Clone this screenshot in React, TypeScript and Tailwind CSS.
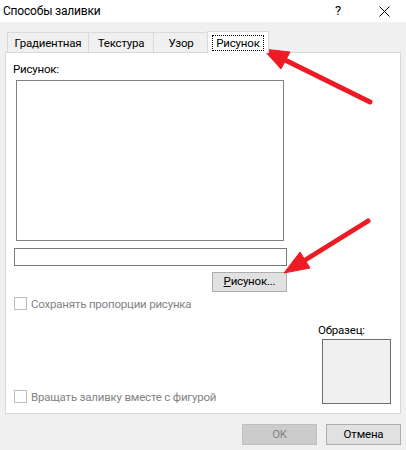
import React from "react"

const font = { fontFamily: 'Roboto, "Noto Sans", sans-serif' }

function Tab({ label, active, w }: { label: string; active?: boolean; w: string }) {
  if (active) {
    return (
      <div className={`relative z-10 -ml-[2px] -mb-px flex h-[22px] ${w} items-start justify-center border border-b-0 border-[#d9d9d9] bg-white pt-[3px]`}>
        <span className="border border-dotted border-black px-[3px] leading-[14px]">{label}</span>
      </div>
    )
  }
  return (
    <div className={`flex h-[20px] ${w} items-center justify-center border border-b-0 border-l-0 first:border-l border-[#d9d9d9] bg-[#f0f0f0] pt-[2px]`}>
      {label}
    </div>
  )
}

function Checkbox({ label }: { label: string }) {
  return (
    <div className="flex h-[14px] items-center gap-[4px] text-[#838383]">
      <div className="h-[13px] w-[13px] border border-[#bcbcbc] bg-white" />
      <span className="leading-[14px]">{label}</span>
    </div>
  )
}

export default function App() {
  return (
    <div className="relative h-[450px] w-[406px] overflow-hidden bg-[#f0f0f0] text-[11.5px] tracking-[-0.2px] text-black" style={font}>
      {/* title bar */}
      <div className="flex h-[22px] items-center bg-white">
        <span className="ml-[3px] text-[12px] leading-[16px]">Способы заливки</span>
        <span className="ml-auto text-[13px] leading-[16px]">?</span>
        <svg className="ml-[38px] mr-[16px]" width="11" height="11" viewBox="0 0 11 11">
          <path d="M0.5 0.5L10.5 10.5M10.5 0.5L0.5 10.5" stroke="#000" strokeWidth="1" />
        </svg>
      </div>

      <div className="px-[5px] pt-[8px]">
        {/* tabs */}
        <div className="flex h-[22px] items-end pl-[2px]">
          <Tab label="Градиентная" w="w-[82px]" />
          <Tab label="Текстура" w="w-[65px]" />
          <Tab label="Узор" w="w-[55px]" />
          <Tab label="Рисунок" w="w-[62px]" active />
        </div>

        {/* panel */}
        <div className="flex h-[362px] w-[396px] flex-col border border-[#d9d9d9] bg-white">
          <div className="ml-[7px] mt-[8px] leading-[16px]">Рисунок:</div>
          <div className="ml-[10px] mt-[3px] h-[163px] w-[268px] border border-[#838383] bg-white" />
          <div className="ml-[8px] mt-[7px] h-[18px] w-[273px] border border-[#7a7a7a] bg-white" />
          <div className="ml-[206px] mt-[6px] flex h-[20px] w-[75px] items-center justify-center border border-[#adadad] bg-[#e1e1e1]">
            <span><span className="underline">Р</span>исунок...</span>
          </div>
          <div className="ml-[8px] mt-[5px]">
            <Checkbox label="Сохранять пропорции рисунка" />
          </div>
          <div className="mt-[11px] flex flex-1 items-end justify-between pb-[9px] pl-[8px] pr-[9px]">
            <Checkbox label="Вращать заливку вместе с фигурой" />
            <div className="flex flex-col items-end">
              <span className="-ml-[4px] self-start leading-[16px]">Образец:</span>
              <div className="mt-[1px] h-[65px] w-[69px] border border-[#6e6e6e] bg-[#f0f0f0]" />
            </div>
          </div>
        </div>

        {/* bottom buttons */}
        <div className="mt-[10px] flex justify-end gap-[9px]">
          <div className="flex h-[21px] w-[75px] items-center justify-center border border-[#bfbfbf] bg-[#cccccc] text-[#838383]">
            OK
          </div>
          <div className="flex h-[21px] w-[75px] items-center justify-center border border-[#adadad] bg-[#e1e1e1]">
            Отмена
          </div>
        </div>
      </div>

      {/* red arrows overlay */}
      <svg className="pointer-events-none absolute inset-0" width="406" height="450" viewBox="0 0 406 450">
        <g fill="#ed1c24" stroke="#ed1c24">
          <line x1="370" y1="102" x2="283" y2="59" strokeWidth="5" strokeLinecap="round" />
          <polygon points="263,49 290,52 281,69" strokeWidth="1" />
          <line x1="368" y1="221" x2="302" y2="262" strokeWidth="5" strokeLinecap="round" />
          <polygon points="284,273 300,252 310,268" strokeWidth="1" />
        </g>
      </svg>
    </div>
  )
}
